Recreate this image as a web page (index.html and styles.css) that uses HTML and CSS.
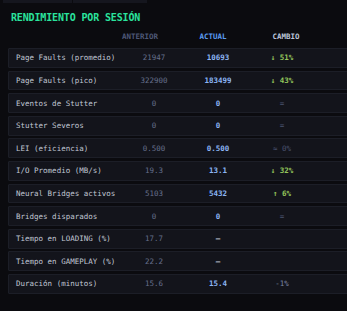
FILE: index.html
```html
<!DOCTYPE html>
<html lang="es">
<head>
<meta charset="utf-8">
<link rel="stylesheet" href="styles.css">
</head>
<body>
<div class="page">
  <div class="tabs"><span class="tab"></span><span class="tab"></span></div>
  <h2 class="title">RENDIMIENTO POR SESIÓN</h2>
  <div class="head">
    <span></span>
    <span class="h-ant">ANTERIOR</span>
    <span class="h-act">ACTUAL</span>
    <span class="h-chg">CAMBIO</span>
  </div>
  <div class="rows">
    <div class="row"><span class="lbl">Page Faults (promedio)</span><span class="ant">21947</span><span class="act">10693</span><span class="chg good">↓ 51%</span></div>
    <div class="row"><span class="lbl">Page Faults (pico)</span><span class="ant">322900</span><span class="act">183499</span><span class="chg good">↓ 43%</span></div>
    <div class="row"><span class="lbl">Eventos de Stutter</span><span class="ant">0</span><span class="act">0</span><span class="chg neutral">=</span></div>
    <div class="row"><span class="lbl">Stutter Severos</span><span class="ant">0</span><span class="act">0</span><span class="chg neutral">=</span></div>
    <div class="row"><span class="lbl">LEI (eficiencia)</span><span class="ant">0.500</span><span class="act">0.500</span><span class="chg neutral">≈ 0%</span></div>
    <div class="row"><span class="lbl">I/O Promedio (MB/s)</span><span class="ant">19.3</span><span class="act">13.1</span><span class="chg good">↓ 32%</span></div>
    <div class="row"><span class="lbl">Neural Bridges activos</span><span class="ant">5103</span><span class="act">5432</span><span class="chg good">↑ 6%</span></div>
    <div class="row"><span class="lbl">Bridges disparados</span><span class="ant">0</span><span class="act">0</span><span class="chg neutral">=</span></div>
    <div class="row"><span class="lbl">Tiempo en LOADING (%)</span><span class="ant">17.7</span><span class="act dash">—</span><span class="chg"></span></div>
    <div class="row"><span class="lbl">Tiempo en GAMEPLAY (%)</span><span class="ant">22.2</span><span class="act dash">—</span><span class="chg"></span></div>
    <div class="row"><span class="lbl">Duración (minutos)</span><span class="ant">15.6</span><span class="act">15.4</span><span class="chg minus">-1%</span></div>
  </div>
</div>
</body>
</html>
```
FILE: styles.css
```css
html, body {
  margin: 0;
  padding: 0;
  background: #0b0b0f;
  overflow: hidden;
}
.page {
  width: 347px;
  height: 311px;
  overflow: hidden;
  font-family: "DejaVu Sans Mono", "Liberation Mono", monospace;
}
.tabs {
  display: flex;
  gap: 1px;
  margin-left: 3px;
  height: 3px;
}
.tab {
  width: 69px;
  background: #15161e;
}
.tab + .tab {
  width: 74px;
}
.title {
  margin: 9px 0 0 11px;
  font-size: 10px;
  line-height: 12px;
  font-weight: bold;
  color: #2ae39d;
  letter-spacing: -0.15px;
}
.head {
  display: grid;
  grid-template-columns: 95.5px 73px 73px 73px;
  margin: 8px 0 0 8px;
  font-size: 7.5px;
  line-height: 10px;
  font-weight: bold;
  text-align: center;
}
.h-ant { color: #4e5877; }
.h-act { color: #5b9cf3; }
.h-chg { color: #bcc5da; }
.rows {
  display: flex;
  flex-direction: column;
  gap: 2.8px;
  margin: 6px -20px 0 8px;
}
.row {
  display: grid;
  grid-template-columns: 113px 64px 64px 64px 1fr;
  align-items: center;
  height: 19.8px;
  box-sizing: border-box;
  background: #13141b;
  border: 1px solid #1c1e27;
  border-radius: 1px;
  font-size: 7.5px;
}
.lbl {
  padding-left: 7px;
  color: #c0c7d4;
  white-space: nowrap;
}
.ant {
  text-align: center;
  color: #66708c;
}
.act {
  text-align: center;
  color: #8cb6f5;
  font-weight: bold;
}
.act.dash {
  color: #c3cad8;
}
.chg {
  text-align: center;
}
.good {
  color: #93c55c;
  font-weight: bold;
}
.neutral {
  color: #4a5370;
}
.minus {
  color: #7b86a3;
}
```
